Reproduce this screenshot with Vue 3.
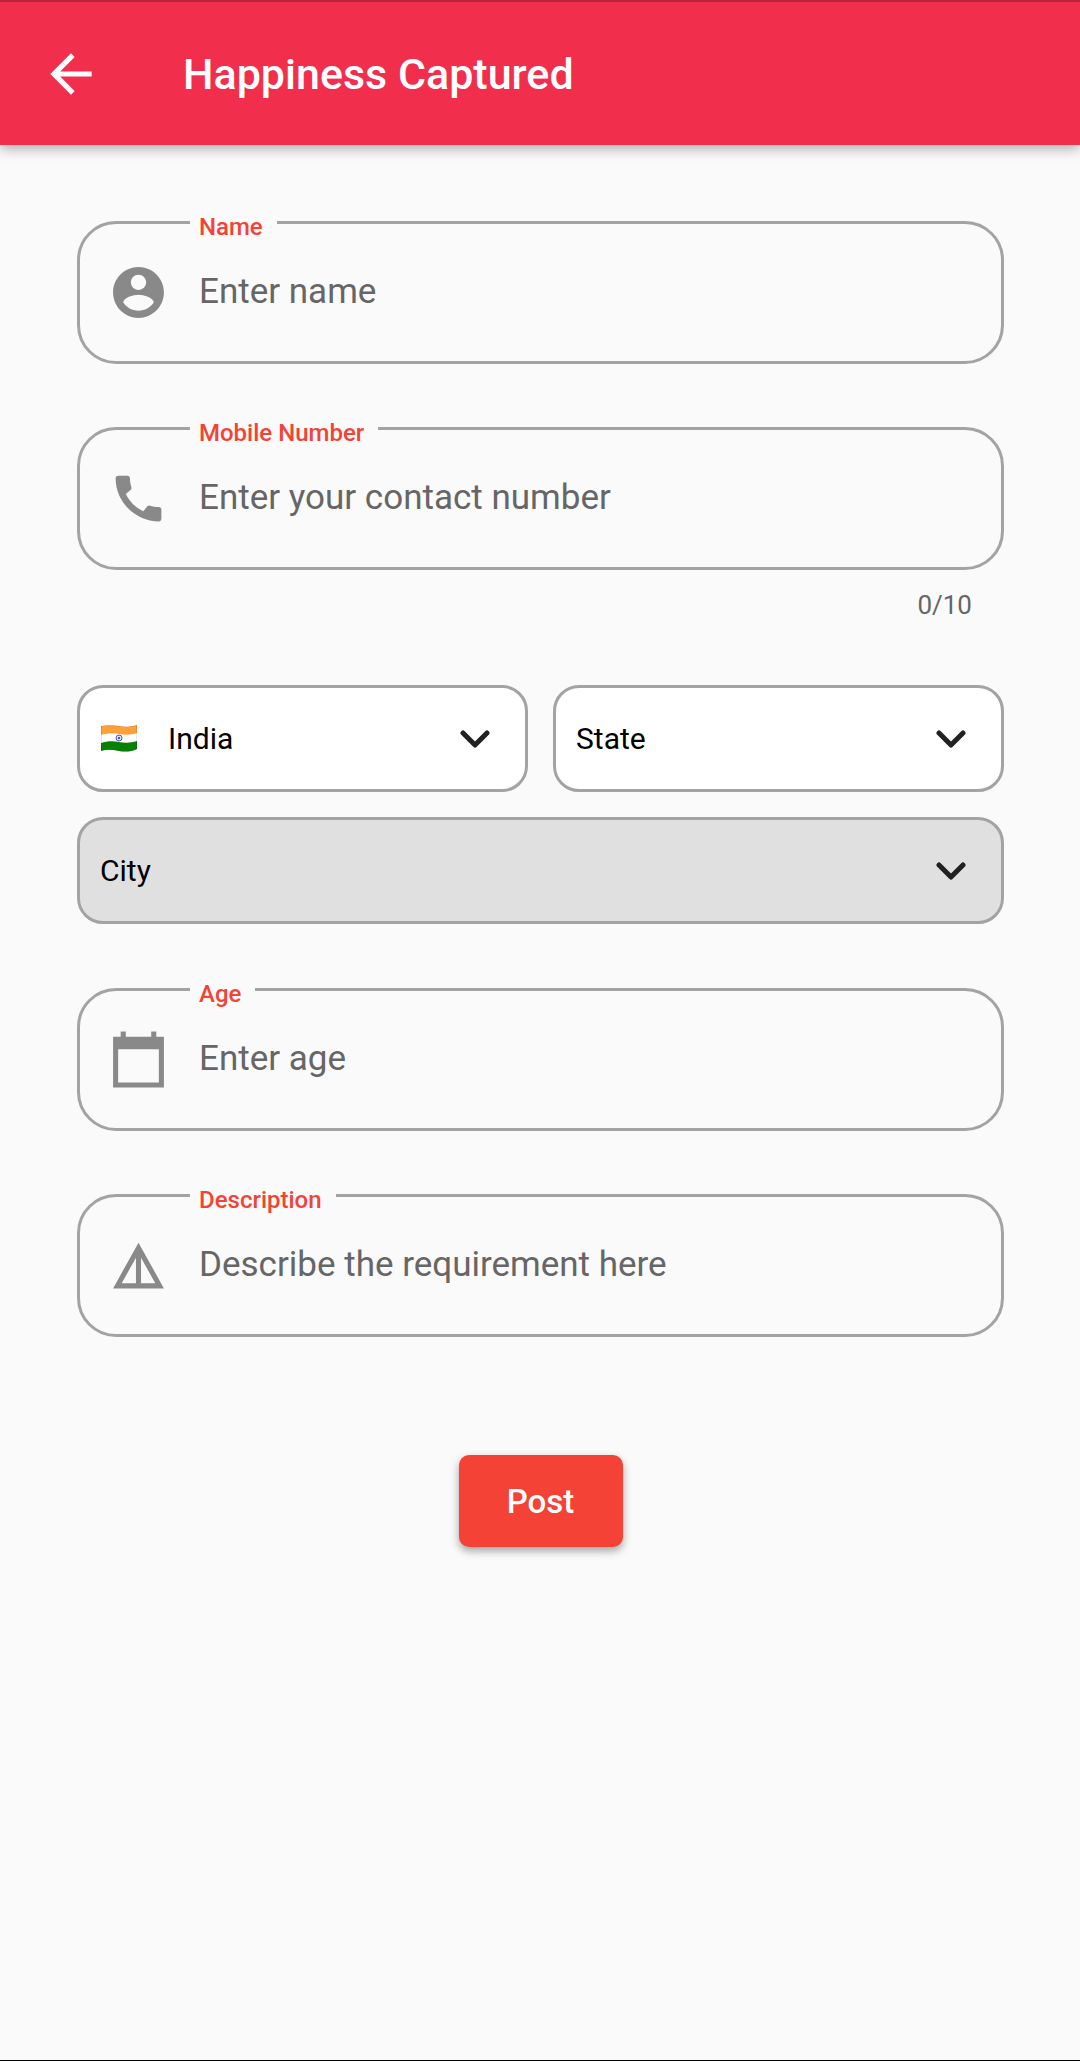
<script setup>
import { ref } from 'vue'

const name = ref('')
const mobile = ref('')
const age = ref('')
const description = ref('')
</script>

<template>
  <div class="screen">
    <header class="bar">
      <button class="back" type="button" aria-label="Back">
        <svg viewBox="0 0 24 24"><path d="M20 11H7.83l5.59-5.59L12 4l-8 8 8 8 1.41-1.41L7.83 13H20v-2z" /></svg>
      </button>
      <h1>Happiness Captured</h1>
    </header>

    <form class="form" @submit.prevent>
      <div class="field">
        <label for="name">Name</label>
        <svg class="icon" viewBox="0 0 24 24">
          <path d="M12 2C6.48 2 2 6.48 2 12s4.480 10 10 10 10-4.480 10-10S17.520 2 12 2zm0 3c1.660 0 3 1.340 3 3s-1.340 3-3 3-3-1.340-3-3 1.340-3 3-3zm0 14.200c-2.500 0-4.710-1.280-6-3.220.030-1.990 4-3.080 6-3.080 1.990 0 5.970 1.090 6 3.080-1.290 1.940-3.500 3.220-6 3.220z" />
        </svg>
        <input id="name" v-model="name" type="text" placeholder="Enter name" />
      </div>

      <div class="field">
        <label for="mobile">Mobile Number</label>
        <svg class="icon" viewBox="0 0 24 24">
          <path d="M20.010 15.380c-1.230 0-2.420-.2-3.530-.56-.35-.12-.74-.03-1.010.24l-1.570 1.970c-2.830-1.350-5.480-3.900-6.890-6.830l1.950-1.660c.27-.28.35-.67.24-1.020-.37-1.110-.56-2.300-.56-3.530 0-.54-.45-.99-.99-.99H4.190C3.650 3 3 3.240 3 3.990 3 13.280 10.730 21 20.010 21c.71 0 .99-.63.99-1.180v-3.450c0-.54-.45-.99-.99-.99z" />
        </svg>
        <input id="mobile" v-model="mobile" type="tel" maxlength="10" placeholder="Enter your contact number" />
      </div>
      <p class="counter">{{ mobile.length }}/10</p>

      <div class="places">
        <div class="pick">
          <svg class="flag" viewBox="0 0 36 27">
            <defs>
              <clipPath id="wave"><path d="M0 1C6 0 12 0 18 1S30 2 36 0V24C30 27 24 27 18 26S6 24 0 26Z" /></clipPath>
            </defs>
            <g clip-path="url(#wave)">
              <rect width="36" height="27" fill="#fff" />
              <path d="M0 0H36V8C30 10 24 10 18 9S6 8 0 10Z" fill="#ff9f38" />
              <path d="M0 18C6 16 12 16 18 17S30 18 36 16V27H0Z" fill="#078006" />
              <path d="M0 1C6 0 12 0 18 1S30 2 36 0V24C30 27 24 27 18 26S6 24 0 26Z" fill="none" stroke="#000" stroke-opacity=".2" />
            </g>
            <circle cx="18" cy="13" r="3" fill="#dcdcf5" stroke="#5555b5" />
            <circle cx="18" cy="13" r="1" fill="#24249c" />
          </svg>
          <select class="flagged" aria-label="Country"><option>India</option></select>
          <svg class="chevron" viewBox="0 0 30 18"><path d="M3 3l12 12L27 3" /></svg>
        </div>
        <div class="pick">
          <select aria-label="State"><option>State</option></select>
          <svg class="chevron" viewBox="0 0 30 18"><path d="M3 3l12 12L27 3" /></svg>
        </div>
        <div class="pick wide">
          <select aria-label="City" disabled><option>City</option></select>
          <svg class="chevron" viewBox="0 0 30 18"><path d="M3 3l12 12L27 3" /></svg>
        </div>
      </div>

      <div class="field">
        <label for="age">Age</label>
        <svg class="icon" viewBox="0 0 24 24"><path d="M22 3h-3V1h-2v2H7V1H5v2H2v20h20V3zm-2 18H4V8h16v13z" /></svg>
        <input id="age" v-model="age" type="text" inputmode="numeric" placeholder="Enter age" />
      </div>

      <div class="field">
        <label for="description">Description</label>
        <svg class="icon" viewBox="0 0 24 24"><path d="M12 3L2 21h20L12 3zm1 5.920L18.600 19H13V8.920zm-2 0V19H5.400L11 8.920z" /></svg>
        <input id="description" v-model="description" type="text" placeholder="Describe the requirement here" />
      </div>

      <button class="post" type="submit">Post</button>
    </form>
  </div>
</template>

<style>
body {
  margin: 0;
  background: #fafafa;
}
</style>

<style scoped>
.screen {
  box-sizing: border-box;
  min-height: 100vh;
  background: #fafafa;
  border-bottom: 1px solid #000;
  font-family: Roboto, sans-serif;
}

.bar {
  box-sizing: border-box;
  display: flex;
  align-items: center;
  gap: 81px;
  height: 145px;
  padding: 0 40px;
  border-top: 2px solid #b7233a;
  background: #f22e4d;
  box-shadow: 0 4px 12px rgba(0, 0, 0, 0.3);
  color: #fff;
}

.back {
  display: flex;
  padding: 0;
  border: 0;
  background: none;
}

.back svg {
  width: 62px;
  height: 62px;
  fill: #fff;
}

h1 {
  margin: 0;
  font-size: 43px;
  line-height: 50px;
  font-weight: 500;
}

.form {
  display: flex;
  flex-direction: column;
  padding: 76px 76px 0 77px;
}

.field {
  position: relative;
  box-sizing: border-box;
  display: flex;
  align-items: center;
  height: 143px;
  padding-left: 28px;
  border: 3px solid #a3a3a3;
  border-radius: 39px;
}

.field + .field {
  margin-top: 63px;
}

.field label {
  position: absolute;
  top: -13px;
  left: 110px;
  padding: 0 14px 0 9px;
  background: #fafafa;
  color: #f44336;
  font-size: 24px;
  line-height: 32px;
  font-weight: 500;
}

.icon {
  flex: none;
  width: 61px;
  height: 61px;
  fill: #898989;
}

.field input {
  flex: 1;
  min-width: 0;
  height: 100%;
  box-sizing: border-box;
  padding: 0 30px 2px;
  border: 0;
  outline: 0;
  background: none;
  color: #222;
  font: 400 35px Roboto, sans-serif;
}

.field input::placeholder {
  color: #666;
  opacity: 1;
}

.counter {
  margin: 19px 32px 0;
  color: #666;
  text-align: right;
  font-size: 26px;
  line-height: 32px;
}

.places {
  display: grid;
  grid-template-columns: 1fr 1fr;
  gap: 25px;
  margin: 64px 0;
}

.pick {
  position: relative;
}

.wide {
  grid-column: 1 / -1;
}

.pick select {
  display: block;
  box-sizing: border-box;
  width: 100%;
  height: 107px;
  padding: 0 80px 0 20px;
  appearance: none;
  border: 3px solid #a3a3a3;
  border-radius: 26px;
  background: #fff;
  color: #000;
  opacity: 1;
  font: 400 30px Roboto, sans-serif;
}

.pick select.flagged {
  padding-left: 88px;
}

.pick select:disabled {
  background: #e0e0e0;
}

.flag {
  position: absolute;
  top: 40px;
  left: 24px;
  width: 36px;
  height: 27px;
}

.chevron {
  position: absolute;
  top: 45px;
  right: 38px;
  width: 30px;
  height: 18px;
  fill: none;
  stroke: #212121;
  stroke-width: 5;
  stroke-linecap: round;
  stroke-linejoin: round;
  pointer-events: none;
}

.post {
  align-self: center;
  margin: 118px 0 64px;
  width: 164px;
  height: 92px;
  padding: 0;
  border: 0;
  border-radius: 10px;
  background: #f44336;
  box-shadow: 0 4px 8px rgba(0, 0, 0, 0.35);
  color: #fff;
  font: 500 33px Roboto, sans-serif;
}
</style>
